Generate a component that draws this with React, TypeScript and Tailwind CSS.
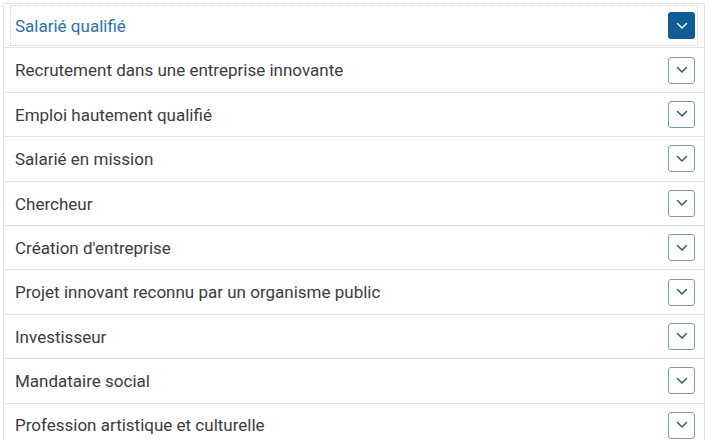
import { useState } from "react";

const items = [
  "Salarié qualifié",
  "Recrutement dans une entreprise innovante",
  "Emploi hautement qualifié",
  "Salarié en mission",
  "Chercheur",
  "Création d'entreprise",
  "Projet innovant reconnu par un organisme public",
  "Investisseur",
  "Mandataire social",
  "Profession artistique et culturelle",
];

function Chevron() {
  return (
    <svg width="12" height="8" viewBox="0 0 12 8" fill="none">
      <path d="M1.5 1.5 L6 6 L10.5 1.5" stroke="currentColor" strokeWidth="1.5" strokeLinecap="round" strokeLinejoin="round" />
    </svg>
  );
}

export default function App() {
  const [open, setOpen] = useState(0);

  return (
    <div className="w-[712px] h-[440px] overflow-hidden bg-white pt-[3px] px-[3px]" style={{ fontFamily: "Roboto, 'Liberation Sans', sans-serif" }}>
      <div className="w-[702px] border-l border-r border-t border-[#e3e3e3]">
        {items.map((label, i) => {
          const active = i === open;
          return (
            <div key={label} className="h-[44.4px] border-b border-[#e3e3e3] flex">
              <button
                onClick={() => setOpen(i)}
                className={
                  active
                    ? "m-[2px] mx-[7px] flex-1 flex items-center justify-between pl-[4px] pr-[2px] outline outline-1 outline-dotted outline-[#c5d0da] text-left"
                    : "flex-1 flex items-center justify-between pl-[11px] pr-[9px] text-left"
                }
              >
                <span className={active ? "pt-[2px] text-[17px] text-[#2b72ac]" : "pt-[2px] text-[17px] text-[#3c3c3c]"}>{label}</span>
                {active ? (
                  <span className="w-[27px] h-[27px] rounded-[3px] bg-[#0e5d97] flex items-center justify-center text-white">
                    <Chevron />
                  </span>
                ) : (
                  <span className="w-[27px] h-[27px] rounded-[3px] border border-[#7c9cb4] bg-white flex items-center justify-center text-[#2f5b7e]">
                    <Chevron />
                  </span>
                )}
              </button>
            </div>
          );
        })}
      </div>
    </div>
  );
}
